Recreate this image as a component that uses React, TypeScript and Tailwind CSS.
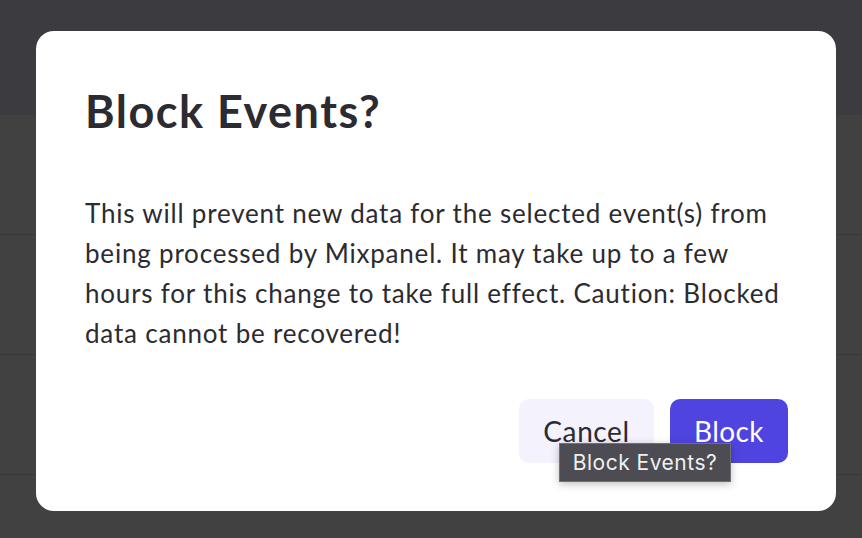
import React from "react";

export default function App() {
  return (
    <div className="relative w-[862px] h-[538px] overflow-hidden bg-[#414141]" style={{ fontFamily: "Lato, 'Noto Sans', sans-serif" }}>
      <div className="flex flex-col">
        <div className="h-[115px] bg-[#3c3c40]" />
        <div className="h-[120px] border-b border-[#39393d]" />
        <div className="h-[120px] border-b border-[#39393d]" />
        <div className="h-[120px] border-b border-[#39393d]" />
      </div>
      <div className="absolute left-[36px] top-[31px] w-[800px] h-[480px] bg-white rounded-[18px] flex flex-col pl-[49px] pr-[48px] pt-[52px] pb-[48px]">
        <h1 className="text-[45px] font-bold leading-[56px] text-[#2b2b31] tracking-[1.5px]">Block Events?</h1>
        <p className="mt-[54px] text-[26px] leading-[40px] text-[#2b2b31] tracking-[0.8px] whitespace-nowrap">
          This will prevent new data for the selected event(s) from<br />
          being processed by Mixpanel. It may take up to a few<br />
          hours for this change to take full effect. Caution: Blocked<br />
          data cannot be recovered!
        </p>
        <div className="mt-auto flex justify-end gap-[16px]">
          <button className="relative h-[64px] w-[135px] rounded-[10px] bg-[#f3f2fd] text-[28px] tracking-[0.6px] text-[#2b2b31]">
            Cancel
          </button>
          <button className="h-[64px] w-[118px] rounded-[10px] bg-[#4f44e0] text-[28px] tracking-[0.4px] text-white">
            Block
          </button>
        </div>
      </div>
      <div
        className="absolute left-[559px] top-[443px] h-[39px] w-[172px] flex items-center justify-center bg-[#4d4c52] border border-[#707074] text-[21px] tracking-[0.5px] text-[#f0f0f0] shadow-[0_2px_8px_rgba(0,0,0,0.25)]"
        style={{ fontFamily: "Inter, sans-serif" }}
      >
        Block Events?
      </div>
    </div>
  );
}
